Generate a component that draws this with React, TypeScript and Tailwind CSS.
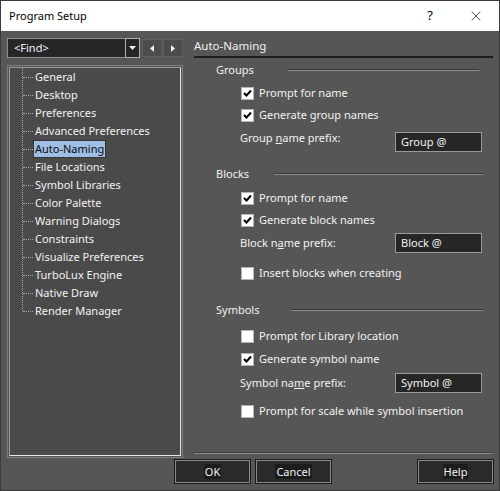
import { X } from 'lucide-react'

const TREE = [
  'General',
  'Desktop',
  'Preferences',
  'Advanced Preferences',
  'Auto-Naming',
  'File Locations',
  'Symbol Libraries',
  'Color Palette',
  'Warning Dialogs',
  'Constraints',
  'Visualize Preferences',
  'TurboLux Engine',
  'Native Draw',
  'Render Manager',
]

const FONT = { fontFamily: '"Segoe UI", "Noto Sans", sans-serif' }

function Check({ checked, label, className = '' }: { checked: boolean; label: string; className?: string }) {
  return (
    <div className={`flex items-center h-[22px] pl-[47px] ${className}`}>
      <span className="w-[13px] h-[13px] bg-white border border-[#b4b4b4] flex items-center justify-center shrink-0">
        {checked && (
          <svg width="9" height="9" viewBox="0 0 9 9">
            <path d="M1 4 L3.5 6.5 L8 1.5" stroke="#000" strokeWidth="2" fill="none" />
          </svg>
        )}
      </span>
      <span className="ml-[5px] text-[#f2f2f2]">{label}</span>
    </div>
  )
}

function Section({ title, lineLeft, lineWidth, className = '' }: { title: string; lineLeft: number; lineWidth: number; className?: string }) {
  return (
    <div className={`relative flex items-center h-[18px] pl-[22px] ${className}`}>
      <span className="text-[#f2f2f2]">{title}</span>
      <div
        className="absolute top-[8px] h-[2px] border-t border-[#3a3a3a] border-b border-b-[#8c8c8c]"
        style={{ left: lineLeft, width: lineWidth }}
      />
    </div>
  )
}

function Prefix({ children, value, className = '', labelClass = '' }: { children: React.ReactNode; value: string; className?: string; labelClass?: string }) {
  return (
    <div className={`flex items-center h-[20px] pl-[46px] ${className}`}>
      <span className={`w-[155px] text-[#f2f2f2] ${labelClass}`}>{children}</span>
      <div className="w-[87px] h-[20px] bg-[#262626] border border-[#9a9a9a] flex items-center pl-[5px] text-[#f2f2f2]">
        {value}
      </div>
    </div>
  )
}

function Button({ label, className = '' }: { label: string; className?: string }) {
  return (
    <button className={`w-[75px] h-[23px] bg-[#2a2a2a] border border-[#8a8a8a] outline outline-1 outline-[#1a1a1a] flex items-center justify-center ${className}`}>
      <span className="bg-[#1c1c1c] px-[1px] text-[#f2f2f2] leading-[15px]">{label}</span>
    </button>
  )
}

export default function App() {
  return (
    <div style={FONT} className="w-[500px] h-[491px] flex flex-col bg-[#565656] border border-[#3a3a3a] text-[11px] overflow-hidden">
      <div className="h-[30px] bg-white flex items-center pl-[8px] shrink-0">
        <span className="text-[#000] text-[11px] flex-1">Program Setup</span>
        <span className="w-[46px] text-center text-[13px] text-black">?</span>
        <span className="w-[46px] flex justify-center">
          <X size={16} strokeWidth={1} className="text-black" />
        </span>
      </div>

      <div className="flex px-[6px] pt-[7px] h-[427px] shrink-0">
        <div className="w-[176px] flex flex-col">
          <div className="flex h-[20px]">
            <div className="w-[133px] h-[20px] flex bg-[#262626] border border-[#8e8e8e]">
              <span className="flex-1 pl-[6px] leading-[18px] text-[#eef4ff]">&lt;Find&gt;</span>
              <span className="w-[15px] h-[20px] -my-[1px] -mr-[1px] border border-[#b0b0b0] flex items-center justify-center">
                <svg width="7" height="4" viewBox="0 0 7 4"><path d="M0 0 H7 L3.5 4 Z" fill="#f2f2f2" /></svg>
              </span>
            </div>
            <span className="ml-[2px] w-[20px] h-[18px] mt-[1px] bg-[#4c4c4c] border border-[#5e5e5e] flex items-center justify-center">
              <svg width="4" height="7" viewBox="0 0 4 7"><path d="M4 0 V7 L0 3.5 Z" fill="#f2f2f2" /></svg>
            </span>
            <span className="ml-[1px] w-[20px] h-[18px] mt-[1px] bg-[#4c4c4c] border border-[#5e5e5e] flex items-center justify-center">
              <svg width="4" height="7" viewBox="0 0 4 7"><path d="M0 0 V7 L4 3.5 Z" fill="#f2f2f2" /></svg>
            </span>
          </div>

          <div className="mt-[7px] flex-1 border border-[#7e7e7e] p-[1px]">
            <div className="h-full bg-[#4a4a4a] border border-[#9a9a9a] border-r-[#e6e6e6] border-b-[#e6e6e6] relative">
              <div className="absolute left-[12px] top-[0px] h-[243px] border-l border-dotted border-[#a8a8a8]" />
              {TREE.map((item) => (
                <div key={item} className="flex items-center h-[18px]">
                  <span className="ml-[13px] w-[10px] border-t border-dotted border-[#a8a8a8]" />
                  <span
                    className={`ml-[1px] px-[1px] leading-[16px] ${
                      item === 'Auto-Naming'
                        ? 'bg-[#9fbfe6] text-[#0a0a0a] outline outline-1 outline-dotted outline-[#222]'
                        : 'text-[#f2f2f2]'
                    }`}
                  >
                    {item}
                  </span>
                </div>
              ))}
            </div>
          </div>
        </div>

        <div className="ml-[11px] w-[300px] flex flex-col">
          <div className="h-[18px] leading-[16px] text-[#f2f2f2] text-[11.5px]">Auto-Naming</div>
          <div className="h-[2px] bg-[#1e1e1e]" />

          <Section title="Groups" lineLeft={94} lineWidth={191} className="mt-[3px]" />
          <Check checked label="Prompt for name" className="mt-[3px]" />
          <Check checked label="Generate group names" />
          <Prefix value="Group @" className="mt-[6px]" labelClass="mb-[8px]">
            Group <u>n</u>ame prefix:
          </Prefix>

          <Section title="Blocks" lineLeft={80} lineWidth={209} className="mt-[13px]" />
          <Check checked label="Prompt for name" className="mt-[4px]" />
          <Check checked label="Generate block names" />
          <Prefix value="Block @" className="mt-[2px]">
            Block n<u>a</u>me prefix:
          </Prefix>
          <Check checked={false} label="Insert blocks when creating" className="mt-[9px]" />

          <Section title="Symbols" lineLeft={97} lineWidth={192} className="mt-[17px]" />
          <Check checked={false} label="Prompt for Library location" className="mt-[6px]" />
          <Check checked label="Generate symbol name" className="mt-[1px]" />
          <Prefix value="Symbol @" className="mt-[3px]">
            Symbol na<u>m</u>e prefix:
          </Prefix>
          <Check checked={false} label="Prompt for scale while symbol insertion" className="mt-[7px]" />

          <div className="mt-auto mb-[4px] h-[2px] border-t border-[#3a3a3a] border-b border-b-[#8c8c8c]" />
        </div>
      </div>

      <div className="flex mt-[2px] pl-[174px] pr-[6px]">
        <Button label="OK" />
        <Button label="Cancel" className="ml-[6px]" />
        <Button label="Help" className="ml-auto" />
      </div>
    </div>
  )
}
